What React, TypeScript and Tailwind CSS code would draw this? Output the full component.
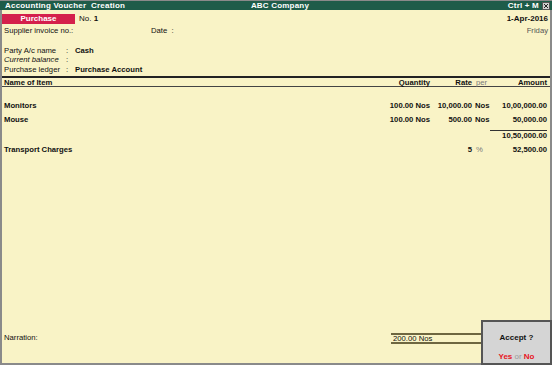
const items = [
  { name: "Monitors", qty: "100.00 Nos", rate: "10,000.00", per: "Nos", amount: "10,00,000.00" },
  { name: "Mouse", qty: "100.00 Nos", rate: "500.00", per: "Nos", amount: "50,000.00" },
];

function Row({ name, qty, rate, per, amount, perGray }: { name: string; qty?: string; rate?: string; per?: string; amount?: string; perGray?: boolean }) {
  return (
    <div className="flex h-[9px] leading-[9px] pr-[3px] font-bold whitespace-nowrap">
      <div className="flex-1 pl-[2px]">{name}</div>
      <div className="w-[60px] text-right">{qty}</div>
      <div className="w-[42px] text-right">{rate}</div>
      <div className={perGray ? "w-[19px] pl-[4px] font-normal text-[#7a7a7a]" : "w-[19px] pl-[3px]"}>{per}</div>
      <div className="w-[56px] text-right">{amount}</div>
    </div>
  );
}

export default function App() {
  return (
    <div className="w-[552px] h-[365px] relative flex flex-col bg-[#f9f3c6] text-[#111] text-[7.7px] font-['Liberation_Sans',Arial,sans-serif] overflow-hidden">
      {/* title bar */}
      <div className="h-[10px] shrink-0 flex items-center bg-[#1e5c49] text-white font-bold text-[8px] leading-[10px] border-t border-[#8a8a8a]">
        <div className="w-[200px] pl-[5px] whitespace-pre tracking-[0.2px]">Accounting Voucher  Creation</div>
        <div className="flex-1 text-center pr-[52px] tracking-[0.2px]">ABC Company</div>
        <div className="w-[140px] flex justify-end items-center gap-[3px] pr-[2px]">
          <span className="tracking-[0.2px]">Ctrl + M</span>
          <span className="w-[8px] h-[8px] bg-[#d0d0d0] border border-[#555] flex items-center justify-center">
            <svg width="6" height="6" viewBox="0 0 6 6">
              <path d="M1 1L5 5M5 1L1 5" stroke="#222" strokeWidth="1" />
            </svg>
          </span>
        </div>
      </div>

      <div className="flex-1 flex flex-col border-x-2 border-b-2 border-[#8a8a8a]">
        {/* voucher header */}
        <div className="mt-[4px] h-[10px] flex items-center">
          <div className="w-[73px] h-[10px] bg-[#d4204c] text-white font-bold text-[8px] leading-[10px] text-center">Purchase</div>
          <div className="ml-[4px] text-[8px]">No. <span className="font-bold">1</span></div>
          <div className="flex-1 text-right pr-[2px] font-bold text-[8px]">1-Apr-2016</div>
        </div>
        <div className="mt-[2px] h-[9px] leading-[9px] flex">
          <div className="w-[149px] pl-[2px]">Supplier invoice no.:</div>
          <div>Date&nbsp;&nbsp;:</div>
          <div className="flex-1 text-right pr-[2px] text-[#555]">Friday</div>
        </div>

        <div className="mt-[11px] h-[9px] leading-[9px] flex">
          <div className="w-[64px] pl-[2px]">Party A/c name</div>
          <div className="w-[9px]">:</div>
          <div className="font-bold">Cash</div>
        </div>
        <div className="h-[10px] leading-[10px] flex">
          <div className="w-[64px] pl-[2px] italic">Current balance</div>
          <div className="w-[9px]">:</div>
        </div>
        <div className="h-[9px] leading-[9px] flex">
          <div className="w-[64px] pl-[2px]">Purchase ledger</div>
          <div className="w-[9px]">:</div>
          <div className="font-bold">Purchase Account</div>
        </div>

        {/* items */}
        <div className="mt-[2px] flex-1 flex flex-col border-t-2 border-[#222]">
          <div className="flex h-[9px] leading-[9px] pr-[3px] font-bold border-b border-[#444]">
            <div className="flex-1 pl-[2px]">Name of Item</div>
            <div className="w-[60px] text-right">Quantity</div>
            <div className="w-[42px] text-right">Rate</div>
            <div className="w-[19px] pl-[4px] font-normal text-[#7a7a7a]">per</div>
            <div className="w-[56px] text-right">Amount</div>
          </div>

          <div className="mt-[14px] flex flex-col gap-[5px]">
            {items.map((it) => (
              <Row key={it.name} {...it} />
            ))}
          </div>

          <div className="mt-[6px] flex pr-[3px]">
            <div className="flex-1" />
            <div className="w-[57px] h-[10px] leading-[9px] border-t border-[#333] text-right font-bold">10,50,000.00</div>
          </div>

          <div className="mt-[5px]">
            <Row name="Transport Charges" rate="5" per="%" amount="52,500.00" perGray />
          </div>

          {/* narration */}
          <div className="mt-auto mb-[19px] flex items-center">
            <div className="w-[389px] pl-[2px]">Narration:</div>
            <div className="flex-1 h-[11px] leading-[8px] border-y-2 border-[#6e6640] pl-[2px]">200.00 Nos</div>
          </div>
        </div>
      </div>

      {/* accept dialog */}
      <div className="absolute right-0 bottom-0 w-[71px] h-[45px] bg-[#d5d5d5] border-2 border-[#555] flex flex-col items-center">
        <div className="mt-[10px] font-bold text-[8px]">Accept ?</div>
        <div className="mt-auto mb-0 text-[8px]">
          <span className="font-bold text-[#e8141e]">Yes</span>
          <span className="text-[#9a9a9a]"> or </span>
          <span className="font-bold text-[#e8141e]">No</span>
        </div>
      </div>
    </div>
  );
}
